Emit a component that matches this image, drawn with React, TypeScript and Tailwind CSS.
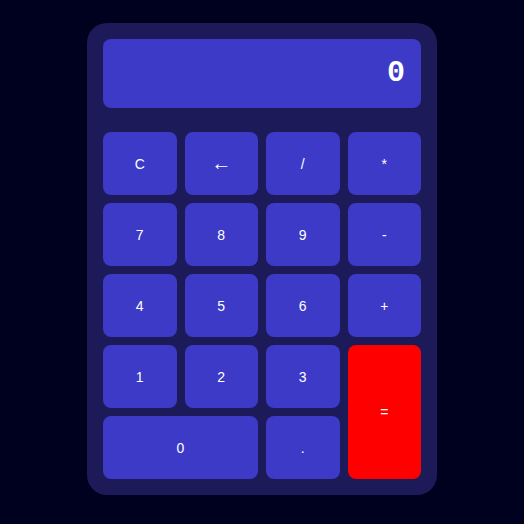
import React from 'react';

const keys: { label: string; className?: string }[] = [
  { label: 'C' },
  { label: '←', className: 'text-[20px]' },
  { label: '/' },
  { label: '*' },
  { label: '7' },
  { label: '8' },
  { label: '9' },
  { label: '-' },
  { label: '4' },
  { label: '5' },
  { label: '6' },
  { label: '+' },
  { label: '1' },
  { label: '2' },
  { label: '3' },
  { label: '=', className: 'row-span-2 bg-[#ff0000]' },
  { label: '0', className: 'col-span-2' },
  { label: '.' },
];

export default function App() {
  return (
    <div className="min-h-screen bg-[#00001f] flex justify-center pt-[23px] font-['Liberation_Sans',Arial,sans-serif]">
      <div className="w-[350px] bg-[#1c1a58] rounded-[20px] p-4 self-start">
        <div className="h-[69px] bg-[#3c3ac6] rounded-lg flex items-center justify-end px-4 mb-6">
          <span className="text-white font-bold text-[30px] font-['Liberation_Mono',monospace]">0</span>
        </div>
        <div className="grid grid-cols-4 gap-2 auto-rows-[63px]">
          {keys.map((k) => (
            <button
              key={k.label}
              className={`rounded-lg text-white text-sm flex items-center justify-center ${k.className ?? ''} ${k.label === '=' ? '' : 'bg-[#3c3ac6]'}`}
            >
              {k.label}
            </button>
          ))}
        </div>
      </div>
    </div>
  );
}
